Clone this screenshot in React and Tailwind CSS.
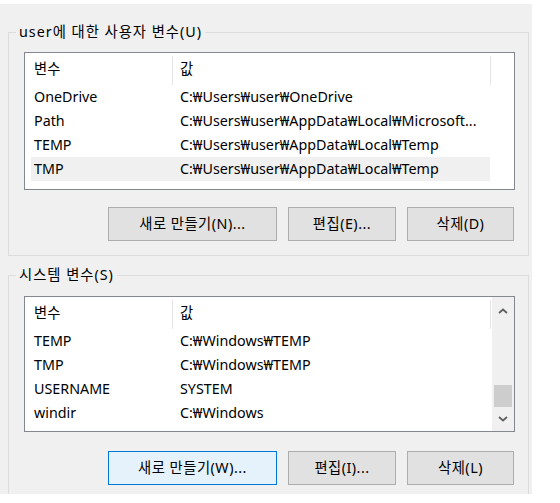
import React from "react";

const userRows = [
  ["OneDrive", "C:₩Users₩user₩OneDrive"],
  ["Path", "C:₩Users₩user₩AppData₩Local₩Microsoft..."],
  ["TEMP", "C:₩Users₩user₩AppData₩Local₩Temp"],
  ["TMP", "C:₩Users₩user₩AppData₩Local₩Temp"],
];

const systemRows = [
  ["TEMP", "C:₩Windows₩TEMP"],
  ["TMP", "C:₩Windows₩TEMP"],
  ["USERNAME", "SYSTEM"],
  ["windir", "C:₩Windows"],
];

const Chevron = ({ up }) => (
  <svg width="10" height="6" viewBox="0 0 10 6" className="text-[#606060]">
    <path
      d={up ? "M1 5 L5 1.5 L9 5" : "M1 1 L5 4.5 L9 1"}
      fill="none"
      stroke="currentColor"
      strokeWidth="1.8"
    />
  </svg>
);

const ListBox = ({ rows, selected, scroll, className }) => (
  <div className={`flex w-[491px] border border-[#828790] bg-white ${className}`}>
    <div className="flex flex-col w-[466px]">
      {/* header */}
      <div className="flex h-[32px]">
        <div className="w-[147px] pl-[9px] flex items-center">변수</div>
        <div className="w-px h-[29px] self-end bg-[#e5e5e5]" />
        <div className="w-[317px] pl-[7px] flex items-center">값</div>
        <div className="w-px h-[29px] self-end bg-[#e5e5e5]" />
      </div>
      {rows.map(([name, value], i) => (
        <div
          key={name}
          className={`flex h-[24px] items-center ml-[6px] w-[459px] ${
            selected === i ? "bg-[#f0f0f0]" : ""
          }`}
        >
          <div className="w-[142px] pl-[3px] whitespace-nowrap">{name}</div>
          <div className="pl-[7px] whitespace-nowrap">{value}</div>
        </div>
      ))}
    </div>
    {scroll && (
      <div className="w-[22px] bg-[#f0f0f0] flex flex-col items-center ml-auto">
        <div className="h-[26px] flex items-center justify-center w-full pt-[2px]">
          <Chevron up />
        </div>
        <div className="flex-1 w-full flex flex-col px-[2px]">
          <div className="h-[62px]" />
          <div className="h-[22px] bg-[#cdcdcd] w-[18px]" />
        </div>
        <div className="h-[24px] flex items-center justify-center w-full">
          <Chevron />
        </div>
      </div>
    )}
  </div>
);

const Button = ({ children, focused, className }) => (
  <button
    className={`h-[34px] border flex items-center justify-center tracking-[0.5px] ${
      focused
        ? "bg-[#e5f1fb] border-[#0078d7]"
        : "bg-[#e1e1e1] border-[#adadad]"
    } ${className}`}
  >
    {children}
  </button>
);

export default function App() {
  return (
    <div className="w-[560px] h-[503px] bg-white pt-[4px] text-[14.3px] text-black font-['Noto_Sans','Noto_Sans_CJK_KR',sans-serif]">
      <div className="w-[532px] h-[490px] bg-[#f0f0f0] overflow-hidden pt-[18px]">
        <fieldset className="ml-[8px] w-[521px] border border-[#dcdcdc] pl-[15px] pt-[10px] pb-[14px]">
          <legend className="ml-[-8px] px-[3px] h-[20px] leading-[20px] tracking-[1px]">
            user에 대한 사용자 변수(U)
          </legend>
          <ListBox rows={userRows} selected={3} className="h-[138px]" />
          <div className="flex mt-[17px] gap-[11px] ml-[84px]">
            <Button className="w-[169px]">새로 만들기(N)...</Button>
            <Button className="w-[108px]">편집(E)...</Button>
            <Button className="w-[107px]">삭제(D)</Button>
          </div>
        </fieldset>

        <fieldset className="ml-[8px] mt-[9px] w-[521px] border border-[#dcdcdc] pl-[15px] pt-[11px] pb-[14px]">
          <legend className="ml-[-8px] px-[3px] h-[20px] leading-[20px] tracking-[1px]">
            시스템 변수(S)
          </legend>
          <ListBox rows={systemRows} scroll className="h-[136px]" />
          <div className="flex mt-[19px] gap-[11px] ml-[84px]">
            <Button focused className="w-[169px]">새로 만들기(W)...</Button>
            <Button className="w-[108px]">편집(I)...</Button>
            <Button className="w-[107px]">삭제(L)</Button>
          </div>
        </fieldset>
      </div>
    </div>
  );
}
